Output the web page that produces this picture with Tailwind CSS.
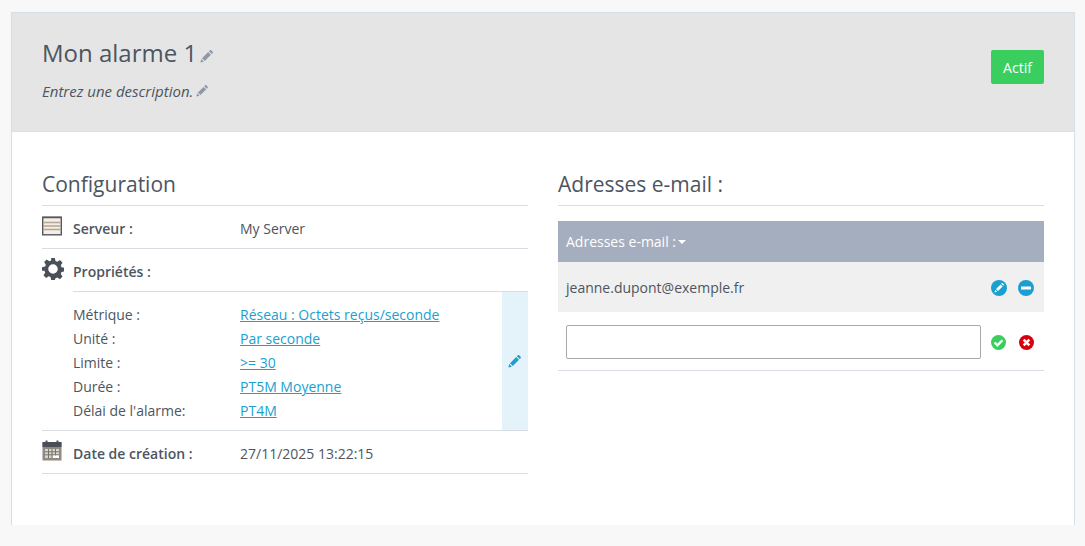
<!DOCTYPE html>
<html lang="fr">
<head>
    <meta charset="UTF-8">
    <title>Mon alarme 1</title>
    <script src="https://cdn.jsdelivr.net/npm/@tailwindcss/browser@4"></script>
</head>
<body class="font-['Open_Sans',sans-serif] bg-[#f8f8f8] text-[#4d5560] text-[14px]">
    <div class="h-[546px] overflow-hidden pt-[12px] pl-[11px]">
        <div class="w-[1064px] h-[513px] bg-white border-x border-t border-[#d8dee6]">
            <!-- Header -->
            <div class="h-[119px] bg-[#e5e5e5] border-b border-[#dcdfe4] pl-[30px] pr-[30px] flex justify-between items-start">
                <div>
                    <h1 class="mt-[23px] h-[33px] leading-[33px] text-[24px] flex items-center">Mon alarme 1
                        <svg class="w-[13px] h-[13px] ml-[3px] mt-[8px]" viewBox="0 0 14 14" fill="#8f97a8"><path d="M0.5 13.5l0.8-3.8 2.9 2.9zM2.2 8.8l6.6-6.6 3 3-6.6 6.6zM9.6 1.4l1-1c.4-.4 1-.4 1.4 0l1.6 1.6c.4.4.4 1 0 1.4l-1 1z"/></svg>
                    </h1>
                    <p class="mt-[10px] h-[24px] leading-[24px] italic text-[15px] flex items-center">Entrez une description.
                        <svg class="w-[12px] h-[12px] ml-[3px]" viewBox="0 0 14 14" fill="#8f97a8"><path d="M0.5 13.5l0.8-3.8 2.9 2.9zM2.2 8.8l6.6-6.6 3 3-6.6 6.6zM9.6 1.4l1-1c.4-.4 1-.4 1.4 0l1.6 1.6c.4.4.4 1 0 1.4l-1 1z"/></svg>
                    </p>
                </div>
                <button class="mt-[37px] w-[53px] h-[34px] bg-[#39ce5e] text-white rounded-[2px]">Actif</button>
            </div>

            <!-- Body -->
            <div class="pt-[30px] pl-[30px] pr-[30px] grid grid-cols-[486px_486px] gap-x-[30px]">
                <!-- Configuration -->
                <div>
                    <h2 class="h-[44px] leading-[44px] text-[21px] border-b border-[#d8dde3]">Configuration</h2>
                    <div class="h-[43px] border-b border-[#d8dde3] flex items-center">
                        <svg class="w-[20px] h-[20px] mt-[-2px]" viewBox="0 0 20 20"><rect x="0.7" y="1.2" width="18.6" height="17.6" fill="#f4eee6" stroke="#55595f" stroke-width="1.4"/><path d="M1 6.5h18M1 10h18M1 13.5h18" stroke="#b4a594" stroke-width="1.3"/><path d="M1 1.5h18" stroke="#55595f" stroke-width="1.5"/></svg>
                        <span class="ml-[11px] mt-[2px] w-[167px] font-semibold">Serveur :</span>
                        <span class="mt-[2px]">My Server</span>
                    </div>
                    <div class="h-[43px] ml-[31px] border-b border-[#d8dde3] flex items-center">
                        <svg class="w-[22px] h-[22px] ml-[-31px] mt-[-2px]" viewBox="0 0 24 24" fill="#4a5058"><path fill-rule="evenodd" d="M10 0h4l.7 3.4 2 .8 2.9-1.9 2.8 2.8-1.9 2.9.8 2 3.4.7v4l-3.4.7-.8 2 1.9 2.9-2.8 2.8-2.9-1.9-2 .8L14 24h-4l-.7-3.4-2-.8-2.9 1.9-2.8-2.8 1.9-2.9-.8-2L0 14v-4l3.4-.7.8-2-1.9-2.9 2.8-2.8 2.9 1.9 2-.8zM12 6.8a5.2 5.2 0 1 0 0 10.4 5.2 5.2 0 0 0 0-10.4z"/></svg>
                        <span class="ml-[9px] mt-[2px] font-semibold">Propriétés :</span>
                    </div>
                    <div class="h-[139px] border-b border-[#d8dde3] flex">
                        <div class="w-[460px] pl-[31px] pt-[11px] leading-[24px]">
                            <div class="flex"><span class="w-[167px]">Métrique :</span><a href="#" class="text-[#1a9fd0] underline">Réseau : Octets reçus/seconde</a></div>
                            <div class="flex"><span class="w-[167px]">Unité :</span><a href="#" class="text-[#1a9fd0] underline">Par seconde</a></div>
                            <div class="flex"><span class="w-[167px]">Limite :</span><a href="#" class="text-[#1a9fd0] underline">&gt;= 30</a></div>
                            <div class="flex"><span class="w-[167px]">Durée :</span><a href="#" class="text-[#1a9fd0] underline">PT5M Moyenne</a></div>
                            <div class="flex"><span class="w-[167px]">Délai de l'alarme:</span><a href="#" class="text-[#1a9fd0] underline">PT4M</a></div>
                        </div>
                        <div class="w-[26px] bg-[#e4f3fa] flex items-center justify-center">
                            <svg class="w-[13px] h-[13px] ml-[-1px]" viewBox="0 0 14 14" fill="#1a9fd0"><path d="M0.5 13.5l0.8-3.8 2.9 2.9zM2.2 8.8l6.6-6.6 3 3-6.6 6.6zM9.6 1.4l1-1c.4-.4 1-.4 1.4 0l1.6 1.6c.4.4.4 1 0 1.4l-1 1z"/></svg>
                        </div>
                    </div>
                    <div class="h-[43px] border-b border-[#d8dde3] flex items-center">
                        <svg class="w-[20px] h-[21px] mt-[-3px]" viewBox="0 0 20 21"><rect x="0.5" y="2" width="19" height="18.5" fill="#8f8a82"/><rect x="0.5" y="2" width="19" height="5" fill="#4a4f57"/><path d="M3 9h14v9H3z" fill="#d9d6cf"/><path d="M3 11.8h14M3 14.8h14M6.5 9v9M10 9v9M13.5 9v9" stroke="#77726b" stroke-width="1"/><path d="M11 15.5h6V18h-6z" fill="#fff"/><rect x="3.5" y="0.5" width="2" height="4" fill="#4a4f57"/><rect x="14.5" y="0.5" width="2" height="4" fill="#4a4f57"/></svg>
                        <span class="ml-[11px] mt-[2px] w-[167px] font-semibold">Date de création :</span>
                        <span class="mt-[2px]">27/11/2025 13:22:15</span>
                    </div>
                </div>

                <!-- Adresses e-mail -->
                <div>
                    <h2 class="h-[44px] leading-[44px] text-[21px] border-b border-[#d8dde3]">Adresses e-mail :</h2>
                    <div class="mt-[15px] h-[41px] bg-[#a5aebf] text-white px-[8px] flex items-center">Adresses e-mail :
                        <span class="ml-[2px] mt-[1px] w-0 h-0 border-x-[4px] border-x-transparent border-t-[4px] border-t-white"></span>
                    </div>
                    <div class="h-[50px] bg-[#f0f0f0] pl-[8px] pr-[10px] flex items-center justify-between">
                        <span>jeanne.dupont@exemple.fr</span>
                        <div class="flex gap-[11px] mt-[2px]">
                            <svg class="w-[16px] h-[16px]" viewBox="0 0 16 16"><circle cx="8" cy="8" r="8" fill="#1a9fd0"/><path fill="#fff" d="M3.6 12.4l.6-2.6 2 2zM5 9l4.6-4.6 2 2L7 11zM10.2 3.8l.5-.5c.3-.3.7-.3 1 0l1 1c.3.3.3.7 0 1l-.5.5z"/></svg>
                            <svg class="w-[16px] h-[16px]" viewBox="0 0 16 16"><circle cx="8" cy="8" r="8" fill="#1a9fd0"/><rect x="3" y="6.5" width="10" height="3" rx="0.5" fill="#fff"/></svg>
                        </div>
                    </div>
                    <div class="h-[59px] border-b border-[#d8dde3] pl-[8px] pr-[10px] flex items-center justify-between">
                        <input type="text" class="w-[415px] h-[34px] mt-[2px] bg-white border border-[#aaaaaa] rounded-[2px]">
                        <div class="flex gap-[13px] mt-[3px]">
                            <svg class="w-[15px] h-[15px]" viewBox="0 0 16 16"><circle cx="8" cy="8" r="8" fill="#39ce5e"/><path d="M3.8 8l3 3 5.4-5.4" fill="none" stroke="#fff" stroke-width="2.6"/></svg>
                            <svg class="w-[15px] h-[15px]" viewBox="0 0 16 16"><circle cx="8" cy="8" r="8" fill="#d8000c"/><path d="M5 5l6 6M11 5l-6 6" fill="none" stroke="#fff" stroke-width="2.8"/></svg>
                        </div>
                    </div>
                </div>
            </div>
        </div>
    </div>
</body>
</html>
